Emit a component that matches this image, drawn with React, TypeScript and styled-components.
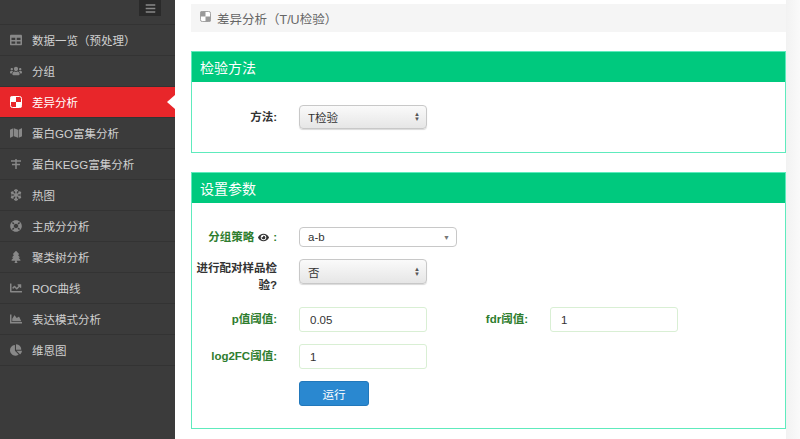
import React from "react";
import styled, { createGlobalStyle } from "styled-components";
import { FaTable, FaUsers, FaMap, FaSnowflake, FaLifeRing, FaTree, FaChartLine, FaChartArea, FaChartPie, FaEye, FaBars } from "react-icons/fa";

const Global = createGlobalStyle`
  html, body { margin: 0; padding: 0; background: #fff; }
  body { font-family: "Helvetica Neue", "Liberation Sans", "Noto Sans CJK SC", sans-serif; font-size: 12px; }
`;

const Page = styled.div`display: flex; height: 439px; overflow: hidden;`;
const Side = styled.nav`width: 175px; flex: none; background: #3b3b3b; display: flex; flex-direction: column;`;
const TopBar = styled.div`height: 24px; display: flex; justify-content: flex-end; padding-right: 14px; border-bottom: 1px solid #333;`;
const Burger = styled.div`width: 22px; height: 16px; background: #2a2a2a; color: #888; display: flex; align-items: center; justify-content: center; font-size: 11px;`;
const Item = styled.div<{ $active?: boolean }>`
  position: relative; height: 30px; border-bottom: 1px solid #333; display: flex; align-items: center;
  padding-left: 10px; gap: 10px; color: ${p => (p.$active ? "#fff" : "#d0d0d0")}; background: ${p => (p.$active ? "#e8262a" : "transparent")};
  font-size: 11.5px;
  svg { color: ${p => (p.$active ? "#fff" : "#888")}; width: 12px; height: 12px; flex: none; }
  ${p => p.$active && `&::after{content:"";position:absolute;right:0;top:8px;border:7px solid transparent;border-right-color:#fff;border-right-width:8px;}`}
`;
const Main = styled.main`flex: 1; padding: 4px 0 0 16px; display: flex; flex-direction: column; gap: 19px;`;
const Gutter = styled.div`width: 14px; flex: none; background: linear-gradient(to right, #f2f2f2, #fafafa);`;
const Crumb = styled.div`height: 28px; background: #f5f5f5; display: flex; align-items: center; gap: 6px; padding-left: 9px; color: #666; font-size: 12.5px;`;
const Panel = styled.section`border: 1px solid #5eebbd; display: flex; flex-direction: column;`;
const Head = styled.div`height: 30px; background: #00c97e; color: #fff; font-size: 14px; display: flex; align-items: center; padding-left: 8px;`;
const Body = styled.div<{ $pad: string }>`padding: ${p => p.$pad}; display: flex; flex-direction: column;`;
const Row = styled.div<{ $h: number; $mt?: number }>`display: flex; align-items: center; height: ${p => p.$h}px; margin-top: ${p => p.$mt ?? 0}px;`;
const Label = styled.label<{ $green?: boolean; $w?: number }>`
  box-sizing: border-box; width: ${p => p.$w ?? 107}px; text-align: right; padding-right: 22px; flex: none; font-weight: bold; line-height: 17px;
  color: ${p => (p.$green ? "#2e7d2e" : "#333")}; font-size: 11.5px; display: flex; justify-content: flex-end; align-items: center; gap: 4px;
`;
const Fake = styled.div<{ $w: number; $h: number; $white?: boolean }>`
  width: ${p => p.$w}px; height: ${p => p.$h}px; box-sizing: border-box; border: 1px solid #c8c8c8; border-radius: 4px;
  background: ${p => (p.$white ? "#fff" : "linear-gradient(#fafafa, #e6e6e6)")}; display: flex; align-items: center; justify-content: space-between;
  padding: 0 6px 0 8px; color: #333; font-size: 11.5px; box-shadow: ${p => (p.$white ? "none" : "0 1px 1px rgba(0,0,0,.15)")};
`;
const Arrows = styled.span`font-size: 6px; line-height: 5px; color: #555; display: flex; flex-direction: column;`;
const Input = styled.input`width: 128px; height: 25px; box-sizing: border-box; border: 1px solid #d9efd4; border-radius: 3px; padding: 0 10px; font-size: 11.5px; color: #333; font-family: inherit;`;
const Btn = styled.button`width: 70px; height: 25px; background: #2a88d0; border: 1px solid #2278bb; border-radius: 3px; color: #fff; font-size: 11.5px; font-family: inherit;`;
const Spacer = styled.div<{ $w: number }>`width: ${p => p.$w}px;`;
const SelSlot = styled.div`align-self: flex-start;`;

const Checker = ({ bg = "#fff" }: { bg?: string }) => (
  <svg width="11" height="11" viewBox="0 0 12 12"><rect x="0.5" y="0.5" width="11" height="11" rx="2" fill={bg} stroke="currentColor"/><rect x="0.5" y="0.5" width="5.5" height="5.5" fill="currentColor"/><rect x="6" y="6" width="5.5" height="5.5" fill="currentColor"/></svg>
);
const Kegg = () => (
  <svg viewBox="0 0 12 12"><path d="M1 3h10M2 6.5h8M6 1v10" stroke="currentColor" strokeWidth="1.5"/></svg>
);
const Sel = () => <Arrows><span>▲</span><span>▼</span></Arrows>;

const items: [React.ReactNode, string][] = [
  [<FaTable />, "数据一览（预处理）"], [<FaUsers />, "分组"], [<Checker bg="#e8262a" />, "差异分析"], [<FaMap />, "蛋白GO富集分析"],
  [<Kegg />, "蛋白KEGG富集分析"], [<FaSnowflake />, "热图"], [<FaLifeRing />, "主成分分析"], [<FaTree />, "聚类树分析"],
  [<FaChartLine />, "ROC曲线"], [<FaChartArea />, "表达模式分析"], [<FaChartPie />, "维恩图"],
];

export default function App() {
  return (
    <Page>
      <Global />
      <Side>
        <TopBar><Burger><FaBars /></Burger></TopBar>
        {items.map(([ic, t], i) => (
          <Item key={t} $active={i === 2}>{ic}{t}</Item>
        ))}
      </Side>
      <Main>
        <Crumb><span style={{ color: "#999" }}><Checker /></span>差异分析（T/U检验）</Crumb>
        <Panel>
          <Head>检验方法</Head>
          <Body $pad="23px 0 23px 0">
            <Row $h={24}><Label>方法:</Label><Fake $w={128} $h={24}>T检验<Sel /></Fake></Row>
          </Body>
        </Panel>
        <Panel>
          <Head>设置参数</Head>
          <Body $pad="24px 0 22px 0">
            <Row $h={20}><Label $green>分组策略 <FaEye size={11} color="#333" /> :</Label><Fake $w={158} $h={20} $white>a-b<span style={{ fontSize: 7, color: "#777" }}>▼</span></Fake></Row>
            <Row $h={36} $mt={12}><Label>进行配对样品检验?</Label><SelSlot><Fake $w={128} $h={25}>否<Sel /></Fake></SelSlot></Row>
            <Row $h={25} $mt={12}><Label $green>p值阈值:</Label><Input defaultValue="0.05" /><Label $green $w={123}>fdr阈值:</Label><Input defaultValue="1" /></Row>
            <Row $h={25} $mt={12}><Label $green>log2FC阈值:</Label><Input defaultValue="1" /></Row>
            <Row $h={25} $mt={12}><Spacer $w={107} /><Btn>运行</Btn></Row>
          </Body>
        </Panel>
      </Main>
      <Gutter />
    </Page>
  );
}
